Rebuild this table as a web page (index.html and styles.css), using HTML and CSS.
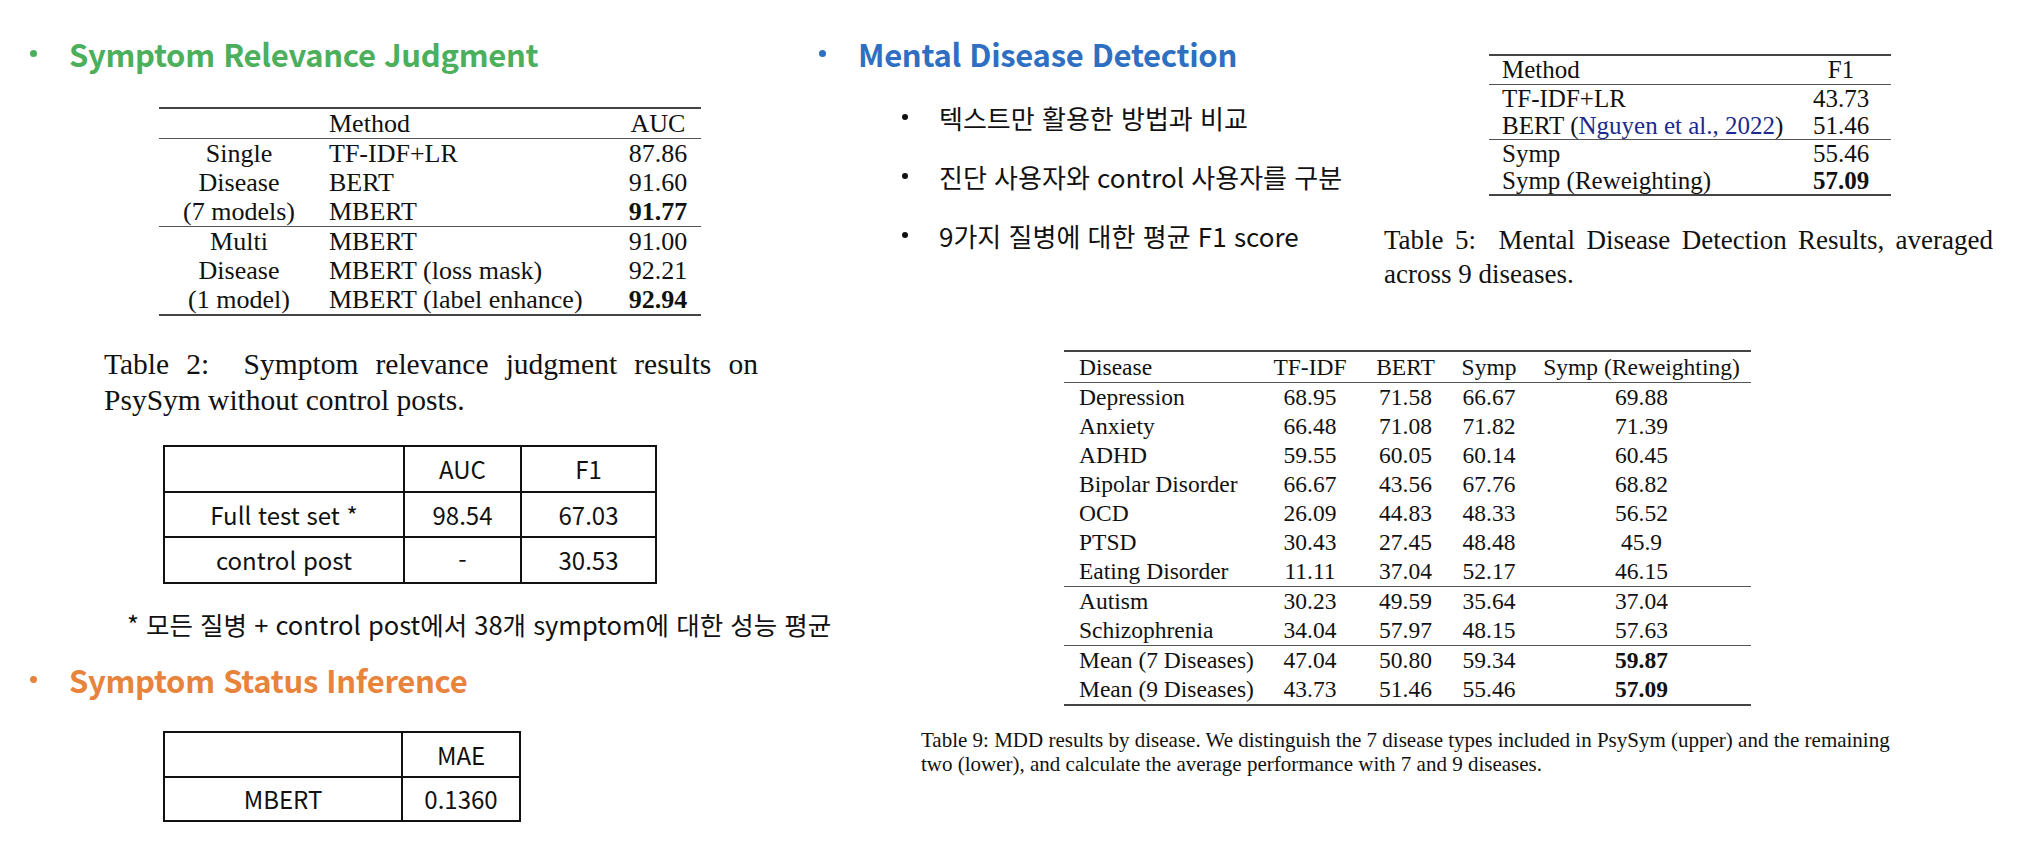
FILE: index.html
```html
<!DOCTYPE html>
<html lang="ko">
<head>
<meta charset="utf-8">
<title>Results</title>
<link rel="stylesheet" href="styles.css">
</head>
<body>
<div class="page">
  <section class="col-left">
    <div class="head green"><span class="dot"></span><span>Symptom Relevance Judgment</span></div>

    <table class="paper t2">
      <colgroup><col class="c-group"><col class="c-method"><col class="c-auc"></colgroup>
      <thead>
        <tr><th></th><th class="l">Method</th><th>AUC</th></tr>
      </thead>
      <tbody class="grp">
        <tr><td>Single</td><td class="l">TF-IDF+LR</td><td>87.86</td></tr>
        <tr><td>Disease</td><td class="l">BERT</td><td>91.60</td></tr>
        <tr><td>(7 models)</td><td class="l">MBERT</td><td><b>91.77</b></td></tr>
      </tbody>
      <tbody class="grp last">
        <tr><td>Multi</td><td class="l">MBERT</td><td>91.00</td></tr>
        <tr><td>Disease</td><td class="l">MBERT (loss mask)</td><td>92.21</td></tr>
        <tr><td>(1 model)</td><td class="l">MBERT (label enhance)</td><td><b>92.94</b></td></tr>
      </tbody>
    </table>

    <p class="caption cap2"><span class="just">Table 2:&nbsp; Symptom relevance judgment results on</span><span class="line">PsySym without control posts.</span></p>

    <table class="grid t3">
      <colgroup><col class="w240"><col class="w117"><col class="w135"></colgroup>
      <tr><td></td><td>AUC</td><td>F1</td></tr>
      <tr><td>Full test set *</td><td>98.54</td><td>67.03</td></tr>
      <tr><td>control post</td><td>-</td><td>30.53</td></tr>
    </table>

    <p class="note">* 모든 질병 + control post에서 38개 symptom에 대한 성능 평균</p>

    <div class="head orange"><span class="dot"></span><span>Symptom Status Inference</span></div>

    <table class="grid t4">
      <colgroup><col class="w238"><col class="w118"></colgroup>
      <tr><td></td><td>MAE</td></tr>
      <tr><td>MBERT</td><td>0.1360</td></tr>
    </table>
  </section>

  <section class="col-right">
    <div class="top">
      <div class="intro">
        <div class="head blue"><span class="dot"></span><span>Mental Disease Detection</span></div>
        <ul class="points">
          <li>텍스트만 활용한 방법과 비교</li>
          <li>진단 사용자와 control 사용자를 구분</li>
          <li>9가지 질병에 대한 평균 F1 score</li>
        </ul>
      </div>
      <div class="t5-wrap">
        <table class="paper t5">
          <colgroup><col class="t5c1"><col class="t5c2"></colgroup>
          <thead><tr><th class="l">Method</th><th>F1</th></tr></thead>
          <tbody class="grp">
            <tr><td class="l">TF-IDF+LR</td><td>43.73</td></tr>
            <tr><td class="l">BERT (<span class="cite">Nguyen et al., 2022</span>)</td><td>51.46</td></tr>
          </tbody>
          <tbody class="grp last">
            <tr><td class="l">Symp</td><td>55.46</td></tr>
            <tr><td class="l">Symp (Reweighting)</td><td><b>57.09</b></td></tr>
          </tbody>
        </table>
        <p class="caption cap5"><span class="just">Table 5:&nbsp; Mental Disease Detection Results, averaged</span><span class="line">across 9 diseases.</span></p>
      </div>
    </div>

    <table class="paper t9">
      <colgroup><col class="t9c1"><col class="t9c2"><col class="t9c3"><col class="t9c4"><col class="t9c5"></colgroup>
      <thead><tr><th class="l">Disease</th><th>TF-IDF</th><th>BERT</th><th>Symp</th><th>Symp (Reweighting)</th></tr></thead>
      <tbody class="grp">
        <tr><td class="l">Depression</td><td>68.95</td><td>71.58</td><td>66.67</td><td>69.88</td></tr>
        <tr><td class="l">Anxiety</td><td>66.48</td><td>71.08</td><td>71.82</td><td>71.39</td></tr>
        <tr><td class="l">ADHD</td><td>59.55</td><td>60.05</td><td>60.14</td><td>60.45</td></tr>
        <tr><td class="l">Bipolar Disorder</td><td>66.67</td><td>43.56</td><td>67.76</td><td>68.82</td></tr>
        <tr><td class="l">OCD</td><td>26.09</td><td>44.83</td><td>48.33</td><td>56.52</td></tr>
        <tr><td class="l">PTSD</td><td>30.43</td><td>27.45</td><td>48.48</td><td>45.9</td></tr>
        <tr><td class="l">Eating Disorder</td><td>11.11</td><td>37.04</td><td>52.17</td><td>46.15</td></tr>
      </tbody>
      <tbody class="grp">
        <tr><td class="l">Autism</td><td>30.23</td><td>49.59</td><td>35.64</td><td>37.04</td></tr>
        <tr><td class="l">Schizophrenia</td><td>34.04</td><td>57.97</td><td>48.15</td><td>57.63</td></tr>
      </tbody>
      <tbody class="grp last">
        <tr><td class="l">Mean (7 Diseases)</td><td>47.04</td><td>50.80</td><td>59.34</td><td><b>59.87</b></td></tr>
        <tr><td class="l">Mean (9 Diseases)</td><td>43.73</td><td>51.46</td><td>55.46</td><td><b>57.09</b></td></tr>
      </tbody>
    </table>

    <p class="cap9">Table 9: MDD results by disease. We distinguish the 7 disease types included in PsySym (upper) and the remaining<br>two (lower), and calculate the average performance with 7 and 9 diseases.</p>
  </section>
</div>
</body>
</html>
```

FILE: styles.css
```css
* { box-sizing: border-box; }
html, body { margin: 0; padding: 0; background: #fff; }
body { width: 2036px; height: 842px; overflow: hidden; color: #111; }

.page { display: flex; width: 2036px; height: 842px; }
.col-left { width: 810px; flex: none; padding-top: 33px; }
.col-right { flex: 1; padding-top: 33px; }

/* section headings */
.head {
  display: flex; align-items: center;
  height: 40px;
  font-family: "Noto Sans CJK KR", "Noto Sans", sans-serif;
  font-weight: 700; font-size: 31px; letter-spacing: -0.3px;
}
.head .dot { width: 7px; height: 7px; border-radius: 50%; background: currentColor; margin-right: 32px; flex: none; }
.col-left .head { padding-left: 30px; }
.col-right .head { padding-left: 9px; }
.green { color: #4caf5c; }
.orange { color: #e8833b; }
.blue { color: #2f6fc1; }

/* academic-paper style tables */
.paper {
  border-collapse: collapse;
  font-family: "Liberation Serif", "Times New Roman", serif;
  color: #111;
}
.paper th, .paper td { padding: 0; font-weight: normal; text-align: center; white-space: nowrap; }
.paper .l { text-align: left; }
.paper thead tr { border-top: 2px solid #444; border-bottom: 1.5px solid #555; }
.paper tbody.grp { border-bottom: 1.5px solid #555; }
.paper tbody.last { border-bottom: 2px solid #444; }
.paper b { font-weight: 700; }

.t2 { margin: 34px 0 0 159px; width: 542px; font-size: 26px; }
.t2 th, .t2 td { line-height: 29px; height: 29px; }
.t2 .c-group { width: 160px; }
.t2 .c-method { width: 296px; }
.t2 .c-auc { width: 86px; }
.t2 td.l, .t2 th.l { padding-left: 10px; }

.caption {
  margin: 0;
  font-family: "Liberation Serif", "Times New Roman", serif;
  color: #111;
}
.caption .just { display: block; text-align: justify; text-align-last: justify; white-space: nowrap; }
.caption .line { display: block; }
.cap2 { margin: 30px 0 0 104px; width: 654px; font-size: 29.5px; line-height: 36px; }

/* bordered slide tables */
.grid {
  border-collapse: collapse;
  font-family: "Noto Sans CJK KR", "Noto Sans", sans-serif;
  font-size: 24px; color: #111;
}
.grid td { border: 2.5px solid #111; text-align: center; padding: 0; }
.w240 { width: 240px; }
.w117 { width: 117px; }
.w135 { width: 135px; }
.w238 { width: 238px; }
.w118 { width: 118px; }
.t3 { margin: 27px 0 0 163px; }
.t3 td { height: 45.5px; }
.t4 { margin: 32px 0 0 163px; }
.t4 td { height: 44.5px; }

.note {
  margin: 25.5px 0 0 127px;
  font-family: "Noto Sans CJK KR", "Noto Sans", sans-serif;
  font-size: 25.5px; line-height: 30px; color: #111; white-space: nowrap;
}
.col-left .head.orange { margin-top: 20px; }

/* right column */
.top { display: flex; }
.intro { width: 574px; flex: none; }
.points {
  list-style: none; margin: 29px 0 0 0; padding: 0 0 0 92px;
  font-family: "Noto Sans CJK KR", "Noto Sans", sans-serif;
  font-size: 26px; color: #111;
}
.points li { display: flex; align-items: center; height: 30px; margin-bottom: 29px; white-space: nowrap; }
.points li::before {
  content: ""; width: 6px; height: 6px; border-radius: 50%; background: #111;
  margin-right: 31px; flex: none;
}

.t5-wrap { width: 609px; flex: none; margin-top: -36px; padding-top: 57px; }
.t5 { margin-left: 105px; width: 402px; font-size: 25px; }
.t5c1 { width: 302px; }
.t5c2 { width: 100px; }
.t5 th { line-height: 28px; height: 28px; }
.t5 td { line-height: 27px; height: 27px; }
.t5 .l { padding-left: 13px; }
.t5 .cite { color: #1d2a8e; }
.cap5 { margin-top: 27px; width: 609px; font-size: 27px; line-height: 34px; }

.t9 { margin: 59px 0 0 254px; width: 687px; font-size: 23.5px; }
.t9c1 { width: 191px; }
.t9c2 { width: 110px; }
.t9c3 { width: 81px; }
.t9c4 { width: 86px; }
.t9c5 { width: 219px; }
.t9 th { line-height: 30px; height: 30px; }
.t9 td { line-height: 29px; height: 29px; }
.t9 .l { padding-left: 15px; }

.cap9 {
  margin: 22px 0 0 111px;
  font-family: "Liberation Serif", "Times New Roman", serif;
  font-size: 21px; line-height: 24px; color: #111; white-space: nowrap;
}
```
